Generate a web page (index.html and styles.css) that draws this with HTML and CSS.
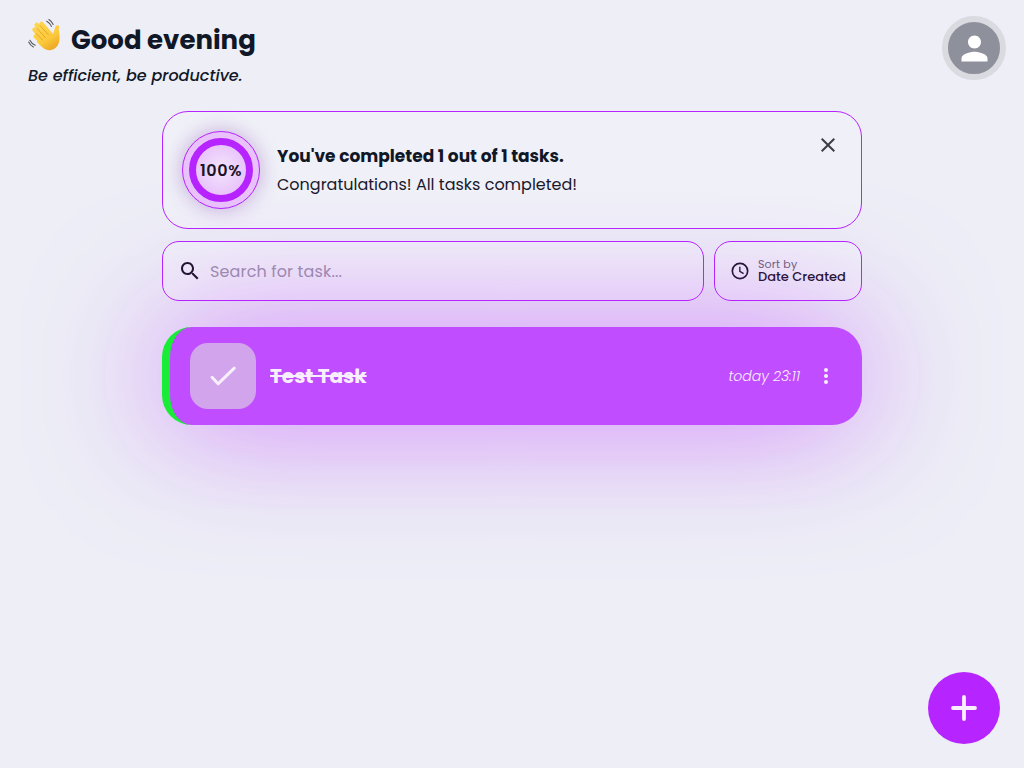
FILE: index.html
```html
<!DOCTYPE html>
<html lang="en">
<head>
<meta charset="utf-8">
<title>Tasks</title>
<link rel="stylesheet" href="styles.css">
</head>
<body>
<header class="header">
  <div>
    <h1 class="greeting">
      <svg class="wave" viewBox="0 0 34 34" aria-hidden="true">
        <defs><linearGradient id="skin" gradientUnits="userSpaceOnUse" x1="8" y1="4" x2="27" y2="33"><stop offset="0" stop-color="#ffd651"/><stop offset=".6" stop-color="#fcc93b"/><stop offset="1" stop-color="#e9a01f"/></linearGradient></defs>
        <g stroke="url(#skin)" stroke-linecap="round" stroke-linejoin="round" fill="none">
          <path stroke-width="4.300" d="M7.600 18.200 15 25.500"/>
          <path stroke-width="4.600" d="M6.600 11.800 16 22"/>
          <path stroke-width="4.700" d="M8.700 7 18 18"/>
          <path stroke-width="4.600" d="M13.500 6 23 17"/>
          <path stroke-width="3.900" d="M29.300 9.200C27.800 12 28.500 15 27 19"/>
        </g>
        <path d="M9 20 14 12 24.300 17.200 26.800 11.500 31 11.500C30.800 15 32.200 18 31.400 22.500C30.500 28.500 26 32.400 21 32.200C17 32 14 29.500 9 24Z" fill="url(#skin)"/>
        <path d="m8.300 15.500 6.300 6.500M9 10.500l8.300 9.100M12 7.500l8.300 9.200" fill="none" stroke="#dc9a20" stroke-width=".8" stroke-linecap="round"/>
        <path d="M18.800 3.200q3.200 1.800 4.700 5.200M20.900 1.500q3 1.900 4.300 5M1.900 22.200q1.900 3.800 5.300 5M.700 24q1.500 3.300 4.700 5" fill="none" stroke="#58595e" stroke-width="1.100" stroke-linecap="round"/>
      </svg>
      <span class="greeting-text">Good evening</span>
    </h1>
    <p class="tagline">Be efficient, be productive.</p>
  </div>
  <div class="avatar"><svg viewBox="0 0 24 24" width="39" height="39"><path fill="#fff" d="M12 12c2.210 0 4-1.790 4-4s-1.790-4-4-4-4 1.790-4 4 1.790 4 4 4m0 2c-2.670 0-8 1.340-8 4v2h16v-2c0-2.660-5.330-4-8-4"/></svg></div>
</header>
<main class="content">
  <section class="progress">
    <div class="ring"><div class="ring-inner"><span class="percent">100%</span></div></div>
    <div class="progress-text">
      <h2 class="progress-title">You've completed 1 out of 1 tasks.</h2>
      <p class="progress-note">Congratulations! All tasks completed!</p>
    </div>
    <svg class="close" viewBox="0 0 24 24"><path fill="#3d3c47" d="M19 6.410 17.590 5 12 10.590 6.410 5 5 6.410 10.590 12 5 17.590 6.410 19 12 13.410 17.590 19 19 17.590 13.410 12z"/></svg>
  </section>
  <div class="toolbar">
    <div class="search">
      <svg width="24" height="24" viewBox="0 0 24 24"><path fill="#1b1428" d="M15.500 14h-.790l-.280-.270C15.410 12.590 16 11.110 16 9.500 16 5.910 13.090 3 9.500 3S3 5.910 3 9.500 5.910 16 9.500 16c1.610 0 3.090-.590 4.230-1.570l.270.280v.790l5 4.990L20.490 19zm-6 0C7.010 14 5 11.990 5 9.500S7.010 5 9.500 5 14 7.010 14 9.500 11.990 14 9.500 14"/></svg>
      <span class="placeholder">Search for task...</span>
    </div>
    <div class="sort">
      <svg width="20" height="20" viewBox="0 0 24 24" fill="none" stroke="#1b1428" stroke-width="2"><circle cx="12" cy="12" r="9.200"/><path stroke-width="1.600" d="M11.800 7v5.400l4.500 2.700"/></svg>
      <div class="sort-text"><span class="sort-label">Sort by</span><span class="sort-value">Date Created</span></div>
    </div>
  </div>
  <article class="task">
    <div class="check"><svg width="36" height="36" viewBox="0 0 24 24"><path d="m4.700 12.900 4 4.300L19.500 6.700" fill="none" stroke="#f8effc" stroke-width="2" stroke-linecap="round" stroke-linejoin="round"/></svg></div>
    <span class="task-name">Test Task</span>
    <span class="task-date">today 23:11</span>
    <svg class="dots" width="24" height="24" viewBox="0 0 24 24" fill="#f8effc"><circle cx="12" cy="6" r="2"/><circle cx="12" cy="12" r="2"/><circle cx="12" cy="18" r="2"/></svg>
  </article>
</main>
<button class="add" aria-label="Add task"><svg width="28" height="28" viewBox="0 0 28 28"><path d="M14 3v22M3 14h22" stroke="#f8effc" stroke-width="3.800" stroke-linecap="round"/></svg></button>
</body>
</html>
```
FILE: styles.css
```css
* { box-sizing: border-box; }
body {
  margin: 0;
  height: 768px;
  overflow: hidden;
  background: #edeef6;
  color: #101727;
  font-family: Poppins, Inter, sans-serif;
}
h1, h2, p { margin: 0; }
svg { display: block; flex: none; }
span, h2, p { white-space: nowrap; }
.header {
  display: flex;
  justify-content: space-between;
  height: 111px;
  padding: 16px 18px 0 28px;
}
.greeting { display: flex; height: 48px; gap: 9px; align-items: center; font-size: 26px; font-weight: 700; }
.wave { width: 34px; height: 34px; margin-top: -10px; }
.tagline { margin-top: 1px; line-height: 21px; font-size: 16px; font-style: italic; font-weight: 500; }
.avatar {
  display: flex;
  align-items: center;
  justify-content: center;
  width: 64px;
  height: 64px;
  border: 6px solid #d9dbe1;
  border-radius: 50%;
  background: #8e919b;
}
.content { width: 700px; margin: 0 auto; }
.progress {
  display: flex;
  height: 118px;
  padding: 19px 21px 19px 19px;
  border: 1px solid #b624ff;
  border-radius: 26px;
  background: #f0f1f8;
}
.ring {
  display: flex;
  align-items: center;
  justify-content: center;
  width: 78px;
  height: 78px;
  border: 1px solid #b624ff;
  border-radius: 50%;
  background: #e9c2fb;
  box-shadow: 0 0 20px rgba(130, 60, 170, 0.4);
}
.ring-inner {
  display: flex;
  align-items: center;
  justify-content: center;
  width: 64px;
  height: 64px;
  border: 7px solid #b624ff;
  border-radius: 50%;
  background: radial-gradient(#f4e5fb, #e4b8fa);
}
.percent { font-size: 16px; font-weight: 600; letter-spacing: 0.6px; color: #1b1428; }
.progress-text { flex: 1; padding: 13px 0 0 17px; }
.progress-title { font-size: 17px; line-height: 25px; font-weight: 700; }
.progress-note { margin-top: 4px; font-size: 16px; line-height: 24px; color: #1b1a2c; }
.close { width: 24px; height: 24px; margin-top: 2px; }
.toolbar { display: flex; gap: 10px; margin-top: 12px; }
.search, .sort {
  display: flex;
  align-items: center;
  height: 60px;
  border: 1px solid #b624ff;
  border-radius: 17px;
  background: #f0f1f8;
}
.search { flex: 1; padding-left: 15px; gap: 8px; }
.placeholder { font-size: 16px; letter-spacing: 0.14px; color: #9b93aa; }
.sort { width: 148px; padding-left: 15px; gap: 8px; }
.sort-text { display: flex; flex-direction: column; margin-top: -2px; }
.sort-label { font-size: 11px; line-height: 12px; letter-spacing: 0.15px; color: #696477; }
.sort-value { font-size: 13px; line-height: 13px; font-weight: 500; color: #1b1428; }
.task {
  display: flex;
  position: relative;
  align-items: center;
  height: 98px;
  margin-top: 26px;
  padding: 0 24px 0 20px;
  border-left: 8px solid #18ec37;
  border-radius: 30px;
  background: #c04dff;
  color: #f8effc;
  box-shadow: 0 0 128px rgba(182, 36, 255, 0.55);
}
.check {
  display: flex;
  align-items: center;
  justify-content: center;
  width: 66px;
  height: 66px;
  border-radius: 18px;
  background: #d2a4eb;
}
.task-name { margin-left: 14px; font-size: 20px; font-weight: 700; text-decoration: line-through; }
.task-date { margin-left: auto; font-size: 14px; font-style: italic; font-weight: 300; }
.dots { margin-left: 14px; }
.add {
  display: flex;
  position: fixed;
  right: 24px;
  bottom: 24px;
  align-items: center;
  justify-content: center;
  width: 72px;
  height: 72px;
  padding: 0;
  border: 0;
  border-radius: 50%;
  background: #b624ff;
}
```
